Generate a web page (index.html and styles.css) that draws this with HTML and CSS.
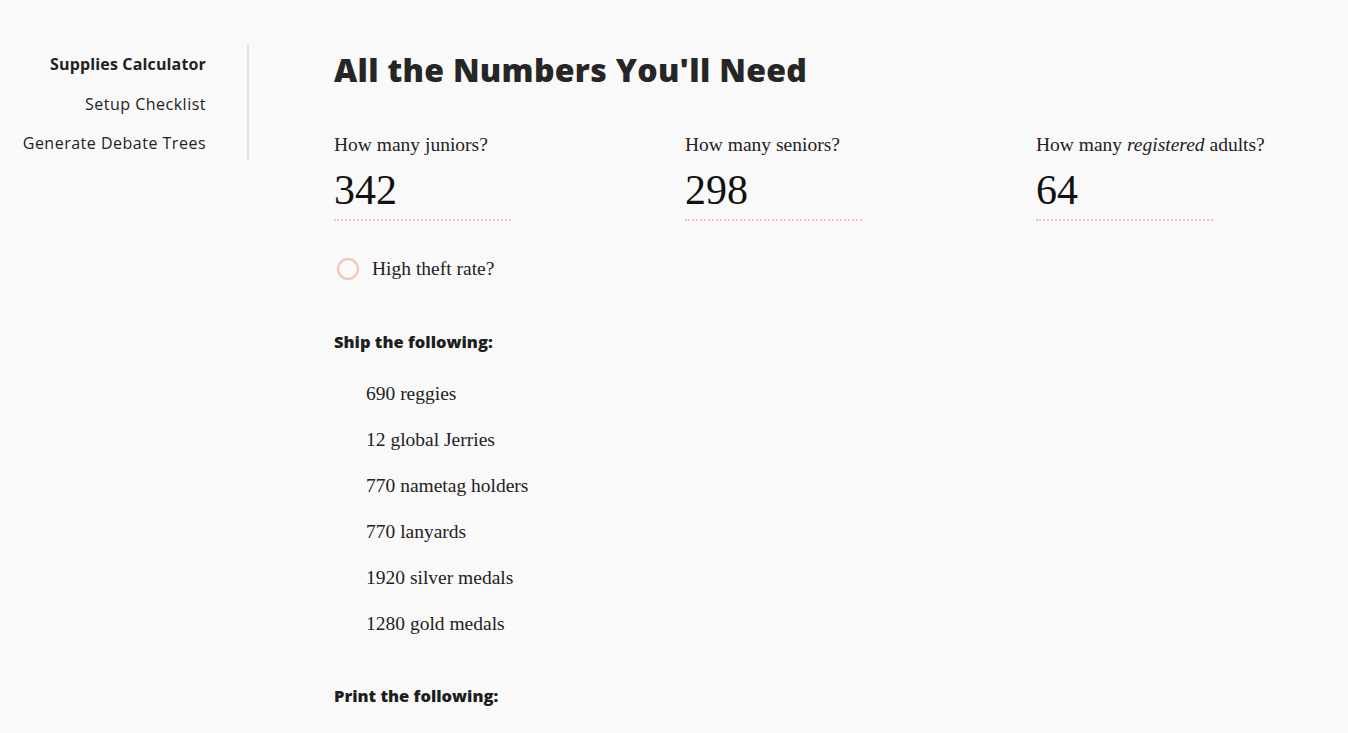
FILE: index.html
```html
<!DOCTYPE html>
<html lang="en">
<head>
<meta charset="utf-8">
<title>Supplies Calculator</title>
<link rel="stylesheet" href="styles.css">
</head>
<body>
<div class="layout">
  <nav class="sidebar">
    <a class="nav-item active" href="#">Supplies Calculator</a>
    <a class="nav-item" href="#">Setup Checklist</a>
    <a class="nav-item" href="#">Generate Debate Trees</a>
  </nav>
  <main class="main">
    <h1 class="title">All the Numbers You'll Need</h1>
    <div class="fields">
      <label class="field">
        <span class="field-label">How many juniors?</span>
        <input class="field-input" type="text" value="342">
      </label>
      <label class="field">
        <span class="field-label">How many seniors?</span>
        <input class="field-input" type="text" value="298">
      </label>
      <label class="field">
        <span class="field-label">How many <em>registered</em> adults?</span>
        <input class="field-input" type="text" value="64">
      </label>
    </div>
    <label class="check">
      <span class="check-circle"></span>
      <span class="check-text">High theft rate?</span>
    </label>
    <h2 class="section-title">Ship the following:</h2>
    <ul class="items">
      <li>690 reggies</li>
      <li>12 global Jerries</li>
      <li>770 nametag holders</li>
      <li>770 lanyards</li>
      <li>1920 silver medals</li>
      <li>1280 gold medals</li>
    </ul>
    <h2 class="section-title print">Print the following:</h2>
  </main>
</div>
</body>
</html>
```
FILE: styles.css
```css
html, body {
  margin: 0;
  padding: 0;
  background: #f9f9f9;
  color: #222;
}
body {
  font-family: "Liberation Serif", serif;
  overflow: hidden;
}
.layout {
  display: flex;
  padding-top: 44px;
  align-items: flex-start;
}
.sidebar {
  flex: 0 0 auto;
  width: 206px;
  padding-top: 1px;
  padding-right: 41px;
  border-right: 2px solid #e2e2e2;
  display: flex;
  flex-direction: column;
  align-items: flex-end;
  font-family: "Open Sans", sans-serif;
  font-size: 16px;
  letter-spacing: 0.5px;
  white-space: nowrap;
}
.nav-item {
  color: #222;
  text-decoration: none;
  line-height: 39.5px;
  height: 39.5px;
}
.nav-item:last-child {
  height: 36px;
}
.nav-item.active {
  font-weight: 700;
  font-size: 16px;
  letter-spacing: 0.15px;
}
.main {
  padding-left: 85px;
  flex: 1;
}
.title {
  margin: 6px 0 0;
  font-family: "Open Sans", sans-serif;
  font-weight: 800;
  font-size: 32px;
  line-height: 40px;
  color: #262626;
  letter-spacing: 0.3px;
}
.fields {
  display: grid;
  grid-template-columns: 351px 351px 351px;
  margin-top: 43px;
}
.field {
  display: flex;
  flex-direction: column;
  align-items: flex-start;
}
.field-label {
  font-size: 19.5px;
  line-height: 24px;
  color: #222;
  white-space: nowrap;
}
.field-label em {
  font-style: italic;
}
.field-input {
  appearance: none;
  background: transparent;
  border: none;
  border-bottom: 2px dotted #f0c4b4;
  outline: none;
  margin: 8px 0 0;
  padding: 0 0 5px;
  width: 177px;
  font-family: "Liberation Serif", serif;
  font-size: 42px;
  line-height: 44px;
  height: 49px;
  color: #111;
}
.check {
  display: flex;
  align-items: center;
  margin-top: 36px;
  margin-left: 3px;
  height: 24px;
}
.check-circle {
  width: 18px;
  height: 18px;
  border: 2px solid #f1c3b1;
  border-radius: 50%;
}
.check-text {
  margin-left: 13px;
  font-size: 19.5px;
}
.section-title {
  font-family: "Open Sans", sans-serif;
  font-size: 16.5px;
  font-weight: 800;
  margin: 49px 0 0;
  line-height: 24px;
  color: #1e1e1e;
}
.items {
  list-style: none;
  margin: 28px 0 0;
  padding: 0 0 0 32px;
}
.items li {
  font-size: 19.5px;
  line-height: 24px;
  height: 46px;
  color: #222;
}
.section-title.print {
  margin-top: 26px;
}
```
